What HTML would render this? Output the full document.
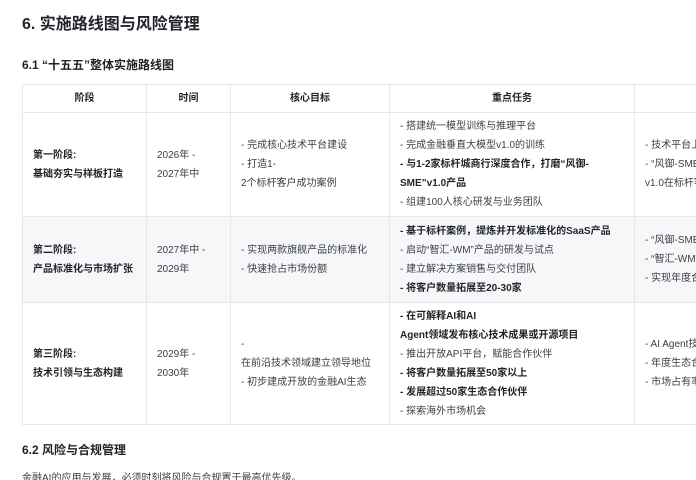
<!DOCTYPE html>
<html><head><meta charset="utf-8"><style>
html,body{margin:0;padding:0;width:696px;height:480px;overflow:hidden;background:#fff;}
body{font-family:"Liberation Sans","Noto Sans CJK SC",sans-serif;color:#1f2329;position:relative;}
h1{position:absolute;left:22px;top:13px;margin:0;font-size:16px;font-weight:bold;line-height:24px;}
h2{position:absolute;margin:0;font-size:12px;font-weight:bold;line-height:18px;left:22px;}
table{position:absolute;left:22px;top:84px;border-collapse:collapse;table-layout:fixed;width:760px;font-size:10px;line-height:19px;}
td,th{border:1px solid #e4e7ec;padding:0 10px;vertical-align:middle;color:#3a3f45;}
th{height:27px;font-weight:bold;text-align:center;color:#1f2329;}
td.s{font-weight:bold;color:#1f2329;}
tr.g td{background:#f6f7f9;}
b{color:#1f2329;}
p{position:absolute;left:22px;top:469px;margin:0;font-size:10px;color:#3a3f45;}
</style></head><body>
<h1>6. 实施路线图与风险管理</h1>
<h2 style="top:56px">6.1 “十五五”整体实施路线图</h2>
<table>
<colgroup><col style="width:124px"><col style="width:84px"><col style="width:159px"><col style="width:245px"><col style="width:148px"></colgroup>
<tr><th>阶段</th><th>时间</th><th>核心目标</th><th>重点任务</th><th></th></tr>
<tr style="height:104px"><td class="s">第一阶段:<br>基础夯实与样板打造</td><td>2026年 -<br>2027年中</td><td>- 完成核心技术平台建设<br>- 打造1-<br>2个标杆客户成功案例</td><td>- 搭建统一模型训练与推理平台<br>- 完成金融垂直大模型v1.0的训练<br><b>- 与1-2家标杆城商行深度合作，打磨“风御-<br>SME”v1.0产品</b><br>- 组建100人核心研发与业务团队</td><td>- 技术平台上线<br>- “风御-SME”<br>v1.0在标杆客户</td></tr>
<tr class="g" style="height:86px"><td class="s">第二阶段:<br>产品标准化与市场扩张</td><td>2027年中 -<br>2029年</td><td>- 实现两款旗舰产品的标准化<br>- 快速抢占市场份额</td><td><b>- 基于标杆案例，提炼并开发标准化的SaaS产品</b><br>- 启动“智汇-WM”产品的研发与试点<br>- 建立解决方案销售与交付团队<br><b>- 将客户数量拓展至20-30家</b></td><td>- “风御-SME”<br>- “智汇-WM”<br>- 实现年度合同</td></tr>
<tr style="height:122px"><td class="s">第三阶段:<br>技术引领与生态构建</td><td>2029年 -<br>2030年</td><td>-<br>在前沿技术领域建立领导地位<br>- 初步建成开放的金融AI生态</td><td><b>- 在可解释AI和AI<br>Agent领域发布核心技术成果或开源项目</b><br>- 推出开放API平台，赋能合作伙伴<br><b>- 将客户数量拓展至50家以上</b><br><b>- 发展超过50家生态合作伙伴</b><br>- 探索海外市场机会</td><td>- AI Agent技术<br>- 年度生态合作<br>- 市场占有率</td></tr>
</table>
<h2 style="top:441px">6.2 风险与合规管理</h2>
<p>金融AI的应用与发展，必须时刻将风险与合规置于最高优先级。</p>
</body></html>
